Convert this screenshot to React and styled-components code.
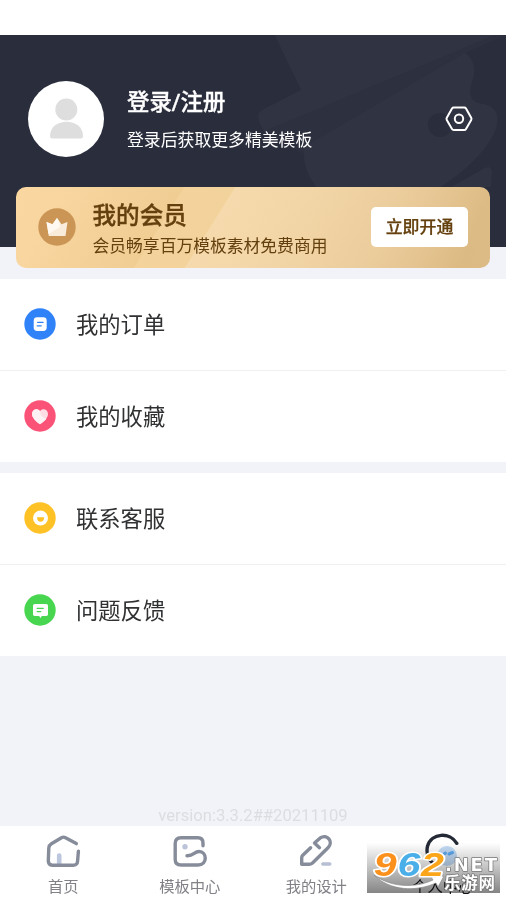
import React from "react";
import styled, { createGlobalStyle } from "styled-components";

const GlobalStyle = createGlobalStyle`
  * { box-sizing: border-box; }
  body { margin: 0; background: #fff; font-family: Roboto, "Noto Sans CJK SC", sans-serif; }
`;

const Screen = styled.main`
  position: relative;
  width: 506px;
  height: 899px;
  overflow: hidden;
  display: flex;
  flex-direction: column;
  background: #f2f3f8;
`;

const StatusBar = styled.div`
  flex: none;
  height: 35px;
  background: #fff;
`;

const Header = styled.header`
  position: relative;
  flex: none;
  height: 212px;
  padding-top: 42px;
  background: #2a2d3b;
`;

const HeaderArt = styled.svg`
  position: absolute;
  right: 0;
  top: 0;
`;

const Profile = styled.div`
  position: relative;
  display: flex;
  align-items: center;
  height: 83px;
  padding: 0 33px 0 28px;
`;

const Avatar = styled.div`
  width: 76px;
  height: 76px;
  border-radius: 50%;
  background: #fff;
`;

const ProfileText = styled.div`
  flex: 1;
  margin-left: 23px;
  color: #fff;
  white-space: nowrap;
`;

const LoginTitle = styled.div`
  font-size: 22.4px;
  font-weight: 500;
  -webkit-text-stroke: 0.35px currentColor;
  line-height: 34px;
`;

const LoginHint = styled.div`
  font-size: 16.85px;
  line-height: 24px;
  margin-top: 9px;
`;

const VipCard = styled.section`
  position: relative;
  flex: none;
  display: flex;
  align-items: center;
  height: 81px;
  margin: -60px 16px 11px;
  padding: 0 22px 1px;
  border-radius: 10px;
  background:
    linear-gradient(122deg, rgba(238, 203, 143, 0) 10%, rgba(238, 203, 143, 0.7) 32%, rgba(243, 211, 155, 0.75) 32.2%, rgba(243, 211, 155, 0.75) 41.7%, rgba(246, 220, 177, 0.8) 41.9%, rgba(246, 220, 177, 0) 100%),
    linear-gradient(112deg, #fad7a0 0%, #f2d19b 45%, #e6c592 75%, #dab77f 94%, #dcbb86 100%);
`;

const VipText = styled.div`
  flex: 1;
  margin-left: 16.5px;
  padding-top: 3px;
  color: #65400f;
  white-space: nowrap;
`;

const VipTitle = styled.div`
  font-size: 23.6px;
  font-weight: 500;
  -webkit-text-stroke: 0.35px currentColor;
  line-height: 34px;
`;

const VipHint = styled.div`
  font-size: 16.8px;
  line-height: 26px;
`;

const VipButton = styled.button`
  width: 97px;
  height: 40px;
  padding: 1px 0 0;
  border: 0;
  border-radius: 5px;
  background: #fff;
  color: #65400f;
  font: 500 16.9px/39px Roboto, "Noto Sans CJK SC", sans-serif;
  -webkit-text-stroke: 0.25px currentColor;
`;

const Group = styled.section`
  flex: none;
  height: 183px;
  margin-bottom: 10.8px;
  background: #fff;
`;

const MenuRow = styled.div`
  display: flex;
  align-items: center;
  height: ${(p) => (p.$last ? 92 : 91.4)}px;
  padding: 0 24px 1px;
  gap: 20px;
  border-top: ${(p) => (p.$last ? "1px solid #eff0f2" : "0")};
  color: #303133;
  font-size: 22.3px;
  line-height: 32px;
`;

const MenuLabel = styled.span`
  padding-top: 2px;
`;

const Version = styled.div`
  margin-top: auto;
  text-align: center;
  color: #dcdde1;
  font-size: 16.6px;
  line-height: 21px;
`;

const TabBar = styled.nav`
  flex: none;
  display: grid;
  grid-template-columns: repeat(4, 1fr);
  height: 73px;
  padding-top: 7px;
  background: #fff;
`;

const Tab = styled.div`
  display: flex;
  flex-direction: column;
  align-items: center;
  color: ${(p) => (p.$active ? "#101218" : "#808187")};
  font-size: 15.3px;
  line-height: 22px;
  gap: 7px;
  svg { fill: none; stroke: ${(p) => (p.$active ? "#242936" : "#878c9b")}; stroke-width: 3.4; stroke-linecap: round; stroke-linejoin: round; }
`;

const WatermarkShade = styled.div`
  position: absolute;
  left: 367px;
  top: 843px;
  width: 133px;
  height: 50px;
  background: linear-gradient(to bottom, #fff, #858585);
  mix-blend-mode: multiply;
`;

const Watermark = styled.svg`
  position: absolute;
  left: 367px;
  top: 843px;
  overflow: visible;
`;

const Disc = ({ color, children }) => (
  <svg width="32" height="32" viewBox="0 0 32 32">
    <circle cx="16" cy="16" r="15.7" fill={color} />
    {children}
  </svg>
);

const OrderIcon = () => (
  <Disc color="#2f82f8">
    <rect x="9.7" y="9.3" width="13" height="13.7" rx="3.4" fill="#fff" />
    <path d="M13.7 14.4H19M13.2 17.8h4" stroke="#2f82f8" strokeWidth="1.3" strokeLinecap="round" />
  </Disc>
);

const HeartIcon = () => (
  <Disc color="#fa5377">
    <path d="M16 24.3C13.8 22.8 8 18.5 8 14c0-4.8 5.5-6.3 8-2.8 2.5-3.5 8-2 8 2.8 0 4.5-5.8 8.8-8 10.3Z" fill="#ffdde4" />
    <path d="M16 24.3C13.8 22.8 8 18.5 8 14c0-4.8 5.5-6.3 8-2.8 1 1.4-1 4.8 6.5 7.6-2 2.6-5 4.5-6.5 5.5Z" fill="#fff2f5" />
  </Disc>
);

const ServiceIcon = () => (
  <Disc color="#fec126">
    <circle cx="16.5" cy="16" r="7.5" fill="#fff" />
    <path d="M13 15.3h7.2c0 6-7.2 6-7.2 0Z" fill="#fec126" />
  </Disc>
);

const FeedbackIcon = () => (
  <Disc color="#48d650">
    <path d="M10.7 10h11.6q1.7 0 1.7 1.7v8.6q0 1.7-1.7 1.7h-4.5L16.5 24l-1.4-2h-4.4Q9 22 9 20.3v-8.6Q9 10 10.7 10Z" fill="#fff" />
    <path d="M13.2 14.4h6M13.2 17.6h3.6" stroke="#48d650" strokeWidth="1.3" strokeLinecap="round" />
  </Disc>
);

const GROUPS = [
  [["我的订单", OrderIcon], ["我的收藏", HeartIcon]],
  [["联系客服", ServiceIcon], ["问题反馈", FeedbackIcon]],
];

const TABS = [
  ["首页", <>
    <path d="M14.2 31v-8.5" stroke="#bcc6dc" strokeWidth="4.6" />
    <path d="M31.3 10.6 20.5 4.7Q18.5 3.6 16.5 4.7L6.4 10.7Q4 12.2 3.8 15L3.3 28q0 4 4 4.200H28q4.400 0 4.600-4.200l.8-9.800" />
  </>],
  ["模板中心", <>
    <circle cx="13" cy="13.7" r="2.7" fill="#bcc4d9" stroke="none" />
    <path d="M31 12.7V10q0-5.300-5-5.300H9q-5.800 0-5.800 5.800v16Q3.200 32 9 32h17c10 0 9-13.500 1-13.500-5 0-5 4.500-12 4.200" />
  </>],
  ["我的设计", <>
    <path d="M24.8 31h7" stroke="#b7bfd4" />
    <path d="M12.600 14.700 4.800 22.200q-1.100 1.200-1.100 2.800v6.300H11q2 0 3.500-1.300L30 14.700c6-6.200-1-14.200-7.800-9.800L16.500 10l5 4.700" />
  </>],
  ["个人中心", <>
    <circle cx="22" cy="23" r="10" fill="#c3dcf6" stroke="none" />
    <path d="M17 22.500 20.500 20M24 21l3.500-1.500" stroke="#5eaaf2" strokeWidth="3" />
    <path d="M31.800 10.300C25-1.300 6.500-.3 2.500 13.200c-1.600 7.400 1 14.200 7.100 18" />
  </>],
];

export default function App() {
  return (
    <>
      <GlobalStyle />
      <Screen>
        <StatusBar />
        <Header>
          <HeaderArt width="253" height="212" viewBox="0 0 253 212">
            <path d="M21.7 0H242L212 17q14 12 7 30c-5 15 1 21 12 22 13 3 17 13 10 30-9 18-29 37-53 53H63q-13-18-12-33L12 98Q0 79 9 75L48 55Z" fill="#303341" />
            <path d="M12 96 242 0h11L210 19 51 112v7Z" fill="#2d303e" />
            <path d="m198 152 32-18q8-5 9 3l-1 15Z" fill="#303341" />
            <circle cx="187" cy="90" r="12" fill="#2a2d3b" />
          </HeaderArt>
          <Profile>
            <Avatar>
              <svg width="76" height="76" viewBox="0 0 76 76">
                <circle cx="38.3" cy="28.5" r="11" fill="#dedede" />
                <path d="M22 55c0-19 33-19 33 0q0 2.5-2.5 2.5h-28Q22 57.5 22 55Z" fill="#dedede" />
              </svg>
            </Avatar>
            <ProfileText>
              <LoginTitle>登录/注册</LoginTitle>
              <LoginHint>登录后获取更多精美模板</LoginHint>
            </ProfileText>
            <svg width="28" height="28" viewBox="0 0 28 28" fill="none" stroke="#fff" strokeWidth="2">
              <path d="M8.8 2.5h10.4q1.2 0 1.8 1l5.2 9.2q.6 1.1 0 2.2L21 24q-.6 1-1.8 1H8.8Q7.6 25 7 24L1.8 14.900q-.6-1.100 0-2.200L7 3.500q.6-1 1.800-1Z" />
              <circle cx="14" cy="13.8" r="4.200" />
            </svg>
          </Profile>
        </Header>
        <VipCard>
          <svg width="38" height="38" viewBox="0 0 38 38">
            <circle cx="19" cy="19" r="18.7" fill="#cb9555" />
            <path d="m8.5 14 6 2.2L19 10l4.5 6.2L29.500 14l-2 14H10.800Z" fill="#faecdb" />
            <path d="m8.5 14 6 2.2L19 10l2 3 1 6-11.500 7Z" fill="#fff9f1" />
          </svg>
          <VipText>
            <VipTitle>我的会员</VipTitle>
            <VipHint>会员畅享百万模板素材免费商用</VipHint>
          </VipText>
          <VipButton>立即开通</VipButton>
        </VipCard>
        {GROUPS.map((rows, i) => (
          <Group key={i}>
            {rows.map(([label, Icon], j) => (
              <MenuRow key={label} $last={j === 1}><Icon /><MenuLabel>{label}</MenuLabel></MenuRow>
            ))}
          </Group>
        ))}
        <Version>version:3.3.2##20211109</Version>
        <TabBar>
          {TABS.map(([label, icon], i) => (
            <Tab key={label} $active={i === 3}>
              <svg width="36" height="36" viewBox="0 0 36 36">{icon}</svg>
              {label}
            </Tab>
          ))}
        </TabBar>
        <WatermarkShade />
        <Watermark width="133" height="50" viewBox="0 0 133 50" strokeLinejoin="round" fontWeight="700">
          <path d="M7 32C25 45 49 45 66 37l-2-3 13-1-6 11-2-4C49 49 23 48 7 32Z" fill="#fff" stroke="#888" strokeWidth=".7" />
          <text x="5.5" y="33" transform="scale(1.25 1)" fontFamily="Liberation Sans" fontStyle="italic" fontSize="33" stroke="#fff" strokeWidth="3" paintOrder="stroke" letterSpacing=".5">
            <tspan fill="#fb901c">9</tspan><tspan fill="#4aaee8">6</tspan><tspan fill="#fba51b">2</tspan>
          </text>
          <text x="78" y="28" textLength="52" fontFamily="DejaVu Sans" fontSize="18" fill="#fff" stroke="#777" strokeWidth="1.5" paintOrder="stroke">.NET</text>
          <text x="77" y="46" textLength="51" fontFamily="Noto Sans CJK SC" fontSize="16.5" fill="#fff" stroke="#777" strokeWidth="1.5" paintOrder="stroke">乐游网</text>
        </Watermark>
      </Screen>
    </>
  );
}
